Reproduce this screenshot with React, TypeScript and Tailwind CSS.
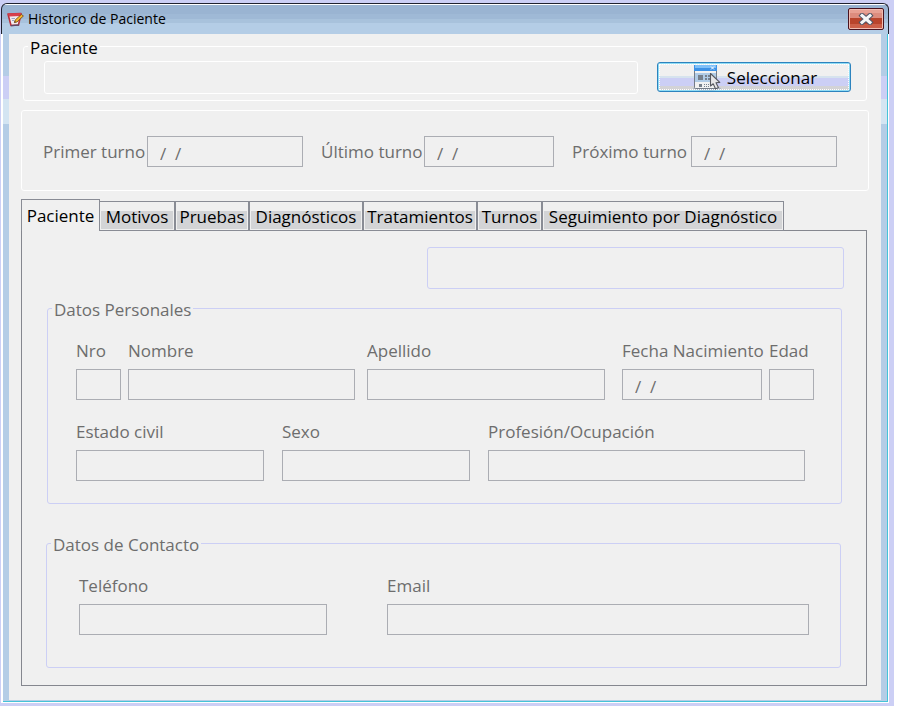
import { useState } from 'react';

const DATE_MASK = '/  /';

function NotebookIcon() {
  return (
    <svg width="17" height="15" viewBox="0 0 17 15" aria-hidden="true">
      <path d="M1 2 L14 1.5 L11.5 13 L4 13.5 Z" fill="#f3ecf0" stroke="#b8303c" strokeWidth="1.6" strokeLinejoin="round" />
      <path d="M1 1.6 L14 1 L13.6 4 L2 4.4 Z" fill="#d8404c" />
      <path d="M4 13.6 L12 13" stroke="#5c4a68" strokeWidth="1.4" />
      <path d="M4.5 6.5 L8 6.5 M5 8.5 L7 8.5" stroke="#9aa6c4" strokeWidth="1" />
      <path d="M7.4 10.6 L8.2 8 L14.4 2.4 L16.4 4 L10 10 Z" fill="#f6b62c" stroke="#6b4310" strokeWidth="0.8" />
      <path d="M7.4 10.6 L7.8 9.2 L8.8 10.1 Z" fill="#201408" />
    </svg>
  );
}

function CloseIcon() {
  return (
    <svg width="16" height="12" viewBox="0 0 16 12" aria-hidden="true">
      <path d="M4 2.5 L12 9.5 M12 2.5 L4 9.5" stroke="#535666" strokeWidth="5" strokeLinecap="square" />
      <path d="M4 2.5 L12 9.5 M12 2.5 L4 9.5" stroke="#f6f6f6" strokeWidth="3" strokeLinecap="square" />
    </svg>
  );
}

function FormCursorIcon() {
  return (
    <svg width="30" height="27" viewBox="0 0 30 27" aria-hidden="true">
      <ellipse cx="16" cy="24.5" rx="14" ry="2" fill="#8fa0b8" opacity="0.6" />
      <rect x="3.5" y="1.5" width="22" height="23" rx="1" fill="#f1f1f1" stroke="#747c88" />
      <rect x="3" y="1" width="23" height="6" fill="#3d92e6" />
      <rect x="4" y="1" width="21" height="3" fill="#7fc0f8" />
      <path d="M20 2.5 L23 5.5 M23 2.5 L20 5.5" stroke="#fff" strokeWidth="1" />
      <rect x="4" y="9" width="21" height="9" fill="#b0cbe6" />
      <rect x="7" y="11" width="5" height="5" fill="#77808c" />
      <path d="M14 11h2v2h-2z M17 11h2v2h-2z M14 14h2v2h-2z M17 14h2v2h-2z" fill="#77808c" />
      <rect x="8" y="20" width="3" height="3" fill="#77808c" />
      <path d="M13 20h1v1h-1z M15 20h1v1h-1z M17 20h1v1h-1z M13 22h1v1h-1z M15 22h1v1h-1z M17 22h1v1h-1z" fill="#77808c" />
      <path d="M19.5 9.5 L19.5 22 L22.2 19.8 L24.6 25 L27.4 23.6 L25 18.8 L28.8 18.4 Z" fill="#e6e6e8" stroke="#55585f" strokeWidth="1.1" strokeLinejoin="round" />
    </svg>
  );
}

const inputClass =
  'block h-[31px] w-full min-w-0 border border-[#abadb3] bg-[#f0f0f0] pl-3 pt-1 text-[#6d6d6d] outline-none';

function Field({ id, label, className, value }: { id: string; label: string; className: string; value?: string }) {
  return (
    <div className={className}>
      <label htmlFor={id} className="block h-7 whitespace-nowrap leading-5">
        {label}
      </label>
      <input id={id} type="text" readOnly defaultValue={value} className={inputClass} />
    </div>
  );
}

function TurnField({ id, label, labelClass, className }: { id: string; label: string; labelClass: string; className: string }) {
  return (
    <div className={className}>
      <label htmlFor={id} className={`shrink-0 whitespace-nowrap ${labelClass}`}>
        {label}
      </label>
      <input id={id} type="text" readOnly defaultValue={DATE_MASK} className={inputClass} />
    </div>
  );
}

const TABS = [
  { name: 'Paciente', width: 'w-[79px]' },
  { name: 'Motivos', width: 'w-[76px]' },
  { name: 'Pruebas', width: 'w-[74px]' },
  { name: 'Diagnósticos', width: 'w-[114px]' },
  { name: 'Tratamientos', width: 'w-[114px]' },
  { name: 'Turnos', width: 'w-[65px]' },
  { name: 'Seguimiento por Diagnóstico', width: 'w-[242px]' },
];

export default function App() {
  const [active, setActive] = useState('Paciente');

  return (
    <div className="min-h-screen bg-white pb-0.5 pr-1 font-['Open_Sans','Noto_Sans',sans-serif] text-[17px] text-[#6d6d6d]">
      <div className="bg-[#cccff5] pb-[3px] pl-px pr-[5px] pt-[3px]">
        <header className="flex h-[31px] items-center rounded-t-md border-x border-t border-[#20222e] bg-[linear-gradient(#fff_0_1px,#9ab4d2_1px_10px,#9fb9d6_10px_15px,#a8c2dc_15px_19px,#b4cde6_19px)] pl-[5px] pr-1">
          <NotebookIcon />
          <h1 className="ml-1 flex-1 text-[14px] leading-5 text-black">Historico de Paciente</h1>
          <button
            type="button"
            aria-label="Cerrar"
            className="flex h-[22px] w-9 items-center justify-center rounded-[2px] border border-[#4a1420] bg-[linear-gradient(#e8a194_0_4px,#dd8c7e_4px_9px,#b9442c_9px_15px,#cc5f48_15px)] shadow-[inset_0_0_0_1px_#f0bdb2]"
          >
            <CloseIcon />
          </button>
        </header>

        <div className="border-b border-l-2 border-r border-white">
          <div className="border-b border-r border-[#45c3d8] bg-[linear-gradient(#b4cde6_0_42px,#cccff5_42px_65px,#d4e5f2_65px_90px,#b4cde6_90px)] px-1.5 pb-px">
            <main className="bg-[#f0f0f0] px-3 pb-3.5 pt-0.5">
              <fieldset className="mx-0.5 h-[65px] rounded-[3px] border border-white pl-5 pr-[15px]">
                <legend className="-ml-4 h-5 px-0.5 leading-6 text-black">Paciente</legend>
                <div className="mt-[5px] flex items-start">
                  <output aria-label="Paciente seleccionado" className="h-[33px] flex-1 rounded-[3px] border border-white" />
                  <button
                    type="button"
                    className="ml-[19px] mt-px flex h-[30px] w-[194px] items-center justify-center rounded-[3px] border border-[#2c83be] bg-[linear-gradient(#f0f0f0_0_13px,#d6e3ee_13px_15px,#cccff5_15px_23px,#d3d3d6_23px)] text-black shadow-[inset_0_0_0_1px_#8fdcf5] outline-1 outline-offset-[-3px] outline-dotted outline-white"
                  >
                    <FormCursorIcon />
                    <span className="ml-1.5 pt-0.5">Seleccionar</span>
                  </button>
                </div>
              </fieldset>

              <section className="mt-[9px] flex h-[81px] items-center rounded-[3px] border border-white pl-[21px] pr-[31px] pt-0.5">
                <TurnField id="primer" label="Primer turno" labelClass="w-[104px]" className="flex flex-[156_1_104px] items-center" />
                <TurnField id="ultimo" label="Último turno" labelClass="w-[103px]" className="ml-[18px] flex flex-[130_1_103px] items-center" />
                <TurnField id="proximo" label="Próximo turno" labelClass="w-[119px]" className="ml-[18px] flex flex-[146_1_119px] items-center" />
              </section>

              <div role="tablist" className="mt-2 flex h-8 items-end text-black">
                {TABS.map((tab) => {
                  const selected = tab.name === active;
                  return (
                    <button
                      key={tab.name}
                      type="button"
                      role="tab"
                      aria-selected={selected}
                      onClick={() => setActive(tab.name)}
                      className={`${tab.width} shrink-0 whitespace-nowrap border-[#898c95] ${
                        selected
                          ? 'relative z-10 -mr-px h-8 border-x border-t bg-[#f0f0f0]'
                          : 'h-[30px] border bg-[linear-gradient(#f0f0f0_0_9px,#d3d4d6_9px)] pt-0.5 shadow-[inset_0_0_0_1px_#f0f0f0]'
                      }`}
                    >
                      {tab.name}
                    </button>
                  );
                })}
              </div>

              <div role="tabpanel" className="-mt-px mr-0.5 border border-[#85878f] pb-[17px] pl-6 pr-[22px] pt-4">
                <output aria-label="Resumen" className="ml-auto block h-[42px] w-[417px] max-w-full rounded-[3px] border border-[#cccff5]" />

                <fieldset className="ml-px mr-0.5 mt-[9px] h-[206px] rounded-[3px] border border-[#cccff5] pl-7 pr-[27px]">
                  <legend className="-ml-6 h-5 px-0.5 leading-6">Datos Personales</legend>
                  <div className="mt-[23px] flex">
                    <Field id="nro" label="Nro" className="w-[45px]" />
                    <Field id="nombre" label="Nombre" className="ml-[7px] flex-[227_1_0%]" />
                    <Field id="apellido" label="Apellido" className="ml-3 flex-[238_1_0%]" />
                    <Field id="nacimiento" label="Fecha Nacimiento" value={DATE_MASK} className="ml-[17px] w-[140px]" />
                    <Field id="edad" label="Edad" className="ml-[7px] w-[45px]" />
                  </div>
                  <div className="mr-[9px] mt-[22px] flex gap-[18px]">
                    <Field id="estado" label="Estado civil" className="flex-[188_1_0%]" />
                    <Field id="sexo" label="Sexo" className="flex-[188_1_0%]" />
                    <Field id="profesion" label="Profesión/Ocupación" className="flex-[317_1_0%]" />
                  </div>
                </fieldset>

                <fieldset className="mr-[3px] mt-[29px] h-[135px] rounded-[3px] border border-[#cccff5] pl-8 pr-[31px]">
                  <legend className="-ml-7 h-5 px-0.5 leading-6">Datos de Contacto</legend>
                  <div className="mt-[23px] flex gap-[60px]">
                    <Field id="telefono" label="Teléfono" className="flex-[248_1_0%]" />
                    <Field id="email" label="Email" className="flex-[422_1_0%]" />
                  </div>
                </fieldset>
              </div>
            </main>
          </div>
        </div>
      </div>
    </div>
  );
}
